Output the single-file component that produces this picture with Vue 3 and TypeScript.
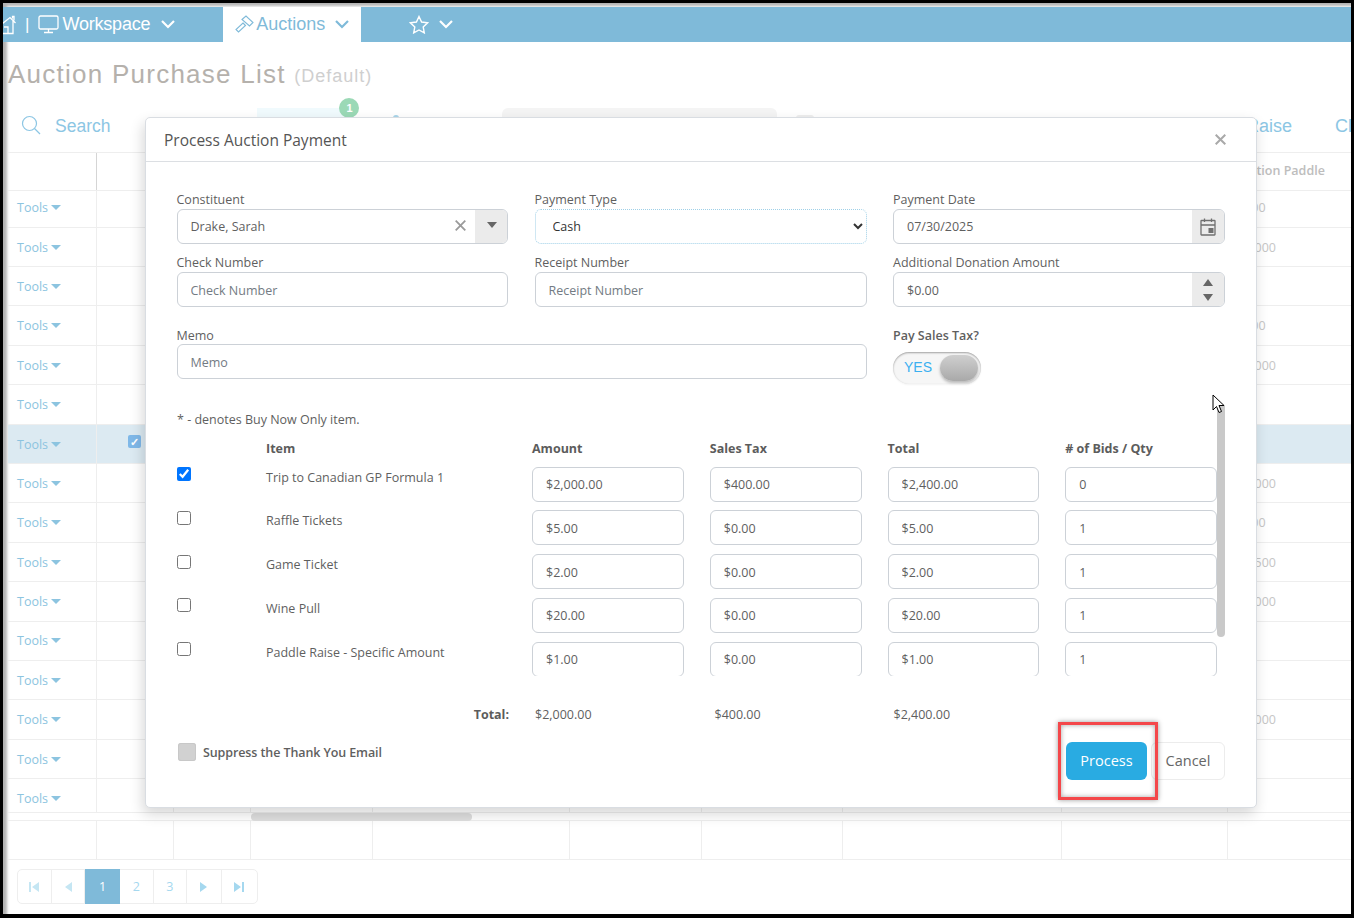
<script setup lang="ts">
interface BgRow { h: number; val: string; sel?: boolean; up?: number; down?: number }
const rows: BgRow[] = [
  { h: 37, val: '$100', up: 3 }, { h: 39, val: '$1,000' }, { h: 39, val: '' }, { h: 40, val: '$100' },
  { h: 39, val: '$1,000' }, { h: 40, val: '' }, { h: 39, val: '', sel: true }, { h: 39, val: '$1,000' },
  { h: 40, val: '$100' }, { h: 39, val: '$1,500' }, { h: 40, val: '$1,000' }, { h: 39, val: '', up: 2 },
  { h: 39, val: '' }, { h: 40, val: '$1,000' }, { h: 39, val: '' }, { h: 34, val: '', down: 6 }
]
const cols = [0, 1, 2, 3, 4, 5, 6, 7, 8]
const items = [
  { name: 'Trip to Canadian GP Formula 1', amount: '$2,000.00', tax: '$400.00', total: '$2,400.00', qty: '0', on: true },
  { name: 'Raffle Tickets', amount: '$5.00', tax: '$0.00', total: '$5.00', qty: '1', on: false },
  { name: 'Game Ticket', amount: '$2.00', tax: '$0.00', total: '$2.00', qty: '1', on: false },
  { name: 'Wine Pull', amount: '$20.00', tax: '$0.00', total: '$20.00', qty: '1', on: false },
  { name: 'Paddle Raise - Specific Amount', amount: '$1.00', tax: '$0.00', total: '$1.00', qty: '1', on: false }
]
</script>

<template>
  <div class="root">
    <nav class="nav">
      <svg class="house" width="14" height="20" viewBox="0 0 14 20" fill="none" stroke="#fff" stroke-width="1.3"><path d="M-1 9 7 2.500l5.500 5.500M10 6v12.500H-1M9.500 3.500V1.500h1.500v4M5 18.500V12h-4"/></svg>
      <span class="sep">|</span>
      <svg class="monitor" width="21" height="19" viewBox="0 0 21 19" fill="none" stroke="#fff" stroke-width="1.3"><rect x="1" y="1" width="19" height="13" rx="1.5"/><path d="M10.500 14v3M6 17.500h9"/></svg>
      <span class="nav-text">Workspace</span>
      <svg class="chev first-chev" width="14" height="9" viewBox="0 0 14 9" fill="none" stroke="#fff" stroke-width="2.200"><path d="m1 1 6 6 6-6"/></svg>
      <div class="tab">
        <svg width="19" height="19" viewBox="0 0 19 19" fill="none" stroke="#7fbad9" stroke-width="1.100"><path d="M7 4.500 11 1l7 6.500-3.500 3.500zM8 8l2.500 2.500-7 6.500L1 14.500z"/></svg>
        <span class="tab-text">Auctions</span>
        <svg class="chev" width="14" height="9" viewBox="0 0 14 9" fill="none" stroke="#7fbad9" stroke-width="2.200"><path d="m1 1 6 6 6-6"/></svg>
      </div>
      <svg class="star" width="20" height="19" viewBox="0 0 20 19" fill="none" stroke="#fff" stroke-width="1.400"><path d="m10 1.500 2.600 5.500 6 .8-4.400 4.100 1.100 6L10 15l-5.300 2.900 1.100-6L1.400 7.800l6-.8z"/></svg>
      <svg class="chev star-chev" width="14" height="9" viewBox="0 0 14 9" fill="none" stroke="#fff" stroke-width="2.200"><path d="m1 1 6 6 6-6"/></svg>
    </nav>

    <h1 class="title">Auction Purchase List <small>(Default)</small></h1>

    <div class="toolbar">
      <svg class="search-icon" width="20" height="20" viewBox="0 0 20 20" fill="none" stroke="#8cc6e4" stroke-width="1.200"><circle cx="8.500" cy="8.500" r="7"/><path d="m13.500 13.500 5.500 5.500"/></svg>
      <span class="tool-link search">Search</span>
      <span class="ghost-blue"><span class="badge">1</span></span>
      <span class="dot-blue"></span>
      <span class="ghost-gray"></span>
      <span class="dot-gray"></span>
      <span class="tool-link raise">Paddle Raise</span>
      <span class="tool-link clear">Clear</span>
    </div>

    <div class="grid-row head">
      <div v-for="c in cols" :key="c" class="cell"></div>
      <div class="cell last">Auction Paddle</div>
    </div>
    <div class="body">
      <div v-for="(r, i) in rows" :key="i" class="grid-row" :class="{ sel: r.sel }" :style="{ height: r.h + 'px' }">
        <div class="cell tools" :style="{ paddingBottom: (r.up ?? 0) + 'px', paddingTop: (r.down ?? 0) + 'px' }">Tools <i class="caret"></i></div>
        <div class="cell check-cell"><span v-if="r.sel" class="bg-check">✓</span></div>
        <div v-for="c in 7" :key="c" class="cell"></div>
        <div class="cell last" :style="{ paddingBottom: (r.up ?? 0) + 'px' }">{{ r.val }}</div>
      </div>
    </div>
    <div class="hscroll"><span class="hthumb"></span></div>
    <div class="grid-row empty">
      <div v-for="c in cols" :key="c" class="cell"></div>
      <div class="cell last"></div>
    </div>

    <div class="pager">
      <span class="pg"><svg width="11" height="10" viewBox="0 0 11 10" fill="#c5e6f3"><path d="M0 0h2v10H0zM10 0v10L3 5z"/></svg></span>
      <span class="pg"><svg width="8" height="10" viewBox="0 0 8 10" fill="#c5e6f3"><path d="M8 0v10L1 5z"/></svg></span>
      <span class="pg active">1</span>
      <span class="pg">2</span>
      <span class="pg">3</span>
      <span class="pg wide"><svg width="8" height="10" viewBox="0 0 8 10" fill="#a5d8ef"><path d="M0 0v10l7-5z"/></svg></span>
      <span class="pg wide"><svg width="11" height="10" viewBox="0 0 11 10" fill="#a5d8ef"><path d="M0 0v10l7-5zM8 0h2v10H8z"/></svg></span>
    </div>

    <section class="modal">
      <header class="modal-head">
        <h2>Process Auction Payment</h2>
        <svg width="11" height="11" viewBox="0 0 11 11" stroke="#a9a9a9" stroke-width="2"><path d="m.7.7 9.600 9.600M10.300.7.7 10.300"/></svg>
      </header>
      <div class="modal-body">
        <div class="form">
          <div class="field">
            <label>Constituent</label>
            <div class="group">
              <input class="ctl" value="Drake, Sarah" />
              <svg class="clear-x" width="11" height="11" viewBox="0 0 11 11" stroke="#9a9a9a" stroke-width="1.800"><path d="m.7.7 9.600 9.600M10.300.7.7 10.300"/></svg>
              <span class="addon"><svg class="drop" width="10" height="6" viewBox="0 0 10 6" fill="#666"><path d="M0 0h10L5 6z"/></svg></span>
            </div>
          </div>
          <div class="field">
            <label>Payment Type</label>
            <select class="ctl sel-ctl"><option>Cash</option></select>
          </div>
          <div class="field">
            <label>Payment Date</label>
            <div class="group">
              <input class="ctl" value="07/30/2025" />
              <span class="addon"><svg width="16" height="18" viewBox="0 0 16 18" fill="none" stroke="#707070" stroke-width="1.300"><rect x="1" y="2.500" width="14" height="14.500" rx=".5"/><path d="M1 7h14M4.500 .5v3.500M11.500 .5v3.500"/><rect x="8.500" y="10" width="5" height="5" fill="#707070" stroke="none"/></svg></span>
            </div>
          </div>
          <div class="field">
            <label>Check Number</label>
            <input class="ctl low" placeholder="Check Number" />
          </div>
          <div class="field">
            <label>Receipt Number</label>
            <input class="ctl low" placeholder="Receipt Number" />
          </div>
          <div class="field">
            <label>Additional Donation Amount</label>
            <div class="group">
              <input class="ctl low" value="$0.00" />
              <span class="addon spin">
                <svg width="10" height="7" viewBox="0 0 10 7" fill="#666"><path d="M0 7h10L5 0z"/></svg>
                <svg width="10" height="7" viewBox="0 0 10 7" fill="#666"><path d="M0 0h10L5 7z"/></svg>
              </span>
            </div>
          </div>
          <div class="field memo">
            <label>Memo</label>
            <input class="ctl low" placeholder="Memo" />
          </div>
          <div class="field memo-side">
            <label class="strong">Pay Sales Tax?</label>
            <div class="toggle"><span>YES</span><i></i></div>
          </div>
        </div>

        <div class="scroller">
          <p class="note">* - denotes Buy Now Only item.</p>
          <div class="item-grid headings">
            <span></span><b>Item</b><b>Amount</b><b>Sales Tax</b><b>Total</b><b># of Bids / Qty</b>
          </div>
          <div v-for="it in items" :key="it.name" class="item-grid item-row">
            <input class="cb" type="checkbox" :checked="it.on" />
            <span class="item-name">{{ it.name }}</span>
            <input class="ctl" :value="it.amount" />
            <input class="ctl" :value="it.tax" />
            <input class="ctl" :value="it.total" />
            <input class="ctl" :value="it.qty" />
          </div>
          <span class="vthumb"></span>
        </div>

        <div class="totals">
          <b>Total:</b><span>$2,000.00</span><span>$400.00</span><span>$2,400.00</span>
        </div>

        <div class="footer">
          <div class="suppress"><i></i><span>Suppress the Thank You Email</span></div>
          <div class="actions">
            <button class="btn primary">Process</button>
            <button class="btn">Cancel</button>
          </div>
        </div>
      </div>
    </section>

    <div class="callout"></div>
    <svg class="cursor" width="14" height="20" viewBox="0 0 14 20"><path d="M1 1v15l3.500-3.500 2.500 6 2.500-1-2.500-6h5z" fill="#fff" stroke="#000" stroke-width="1"/></svg>
  </div>
</template>

<style>
html, body { margin: 0; background: #fff; }
</style>

<style scoped>
.root {
  position: relative;
  width: 1354px;
  height: 918px;
  box-sizing: border-box;
  overflow: hidden;
  border: solid #000;
  border-width: 3px 3px 4px 3px;
  padding: 4px 0 0 5px;
  background: #fff;
  box-shadow: inset 4px 3px 3px rgba(0, 0, 0, 0.3);
  font-family: "Open Sans", "Noto Sans", sans-serif;
  font-size: 12.5px;
  color: #5f5f5f;
}
.nav {
  display: flex;
  align-items: center;
  height: 35px;
  margin-left: -5px;
  background: #7fbad9;
  color: #fff;
  font-family: "Liberation Sans", sans-serif;
  font-size: 18px;
}
.sep { margin-left: 8px; font-size: 17px; }
.monitor { margin-left: 9px; }
.nav-text { margin-left: 3px; letter-spacing: -0.2px; }
.chev { margin-left: 10px; flex: none; }
.first-chev { margin-left: 11px; }
.tab {
  display: flex;
  align-items: center;
  width: 138px;
  height: 35px;
  box-sizing: border-box;
  margin-left: 48px;
  padding-left: 12px;
  background: #fff;
}
.tab-text { margin-left: 2px; color: #7fbad9; }
.star { margin-left: 48px; }
.star-chev { margin-left: 10px; }
.title {
  height: 58px;
  margin: 0;
  font-family: "Liberation Sans", sans-serif;
  font-size: 26px;
  font-weight: 400;
  line-height: 65px;
  letter-spacing: 1.25px;
  color: #b5b1ac;
}
.title small { font-size: 18px; letter-spacing: 1px; color: #cfcfcf; position: relative; top: -1px; }
.toolbar {
  position: relative;
  display: flex;
  height: 52px;
  border-bottom: 1px solid #eee;
  font-family: "Liberation Sans", sans-serif;
  font-size: 18px;
}
.search-icon { margin: 15px 0 0 13px; }
.tool-link { color: #8cc6e4; }
.search { margin: 16px 0 0 14px; font-size: 17.500px; }
.ghost-blue {
  position: relative;
  width: 92px;
  height: 10px;
  margin: 8px 0 0 147px;
  background: #f0fafd;
}
.badge {
  position: absolute;
  right: -10px;
  top: -10px;
  width: 20px;
  height: 20px;
  border-radius: 50%;
  background: #9bd9b6;
  color: #fff;
  font-size: 11px;
  font-weight: 700;
  line-height: 20px;
  text-align: center;
}
.dot-blue { width: 6px; height: 3px; margin: 15px 0 0 44px; border-radius: 3px 3px 0 0; background: #a8d5ea; }
.ghost-gray {
  width: 275px;
  height: 10px;
  margin: 8px 0 0 103px;
  border-radius: 6px 6px 0 0;
  background: #f4f4f4;
}
.dot-gray { width: 18px; height: 3px; margin: 15px 0 0 19px; border-radius: 6px 6px 0 0; background: #eeeeee; }
.raise { margin: 16px 0 0 auto; }
.clear { margin: 16px -27px 0 43px; }
.grid-row {
  display: grid;
  grid-template-columns: 89px 77px 77px 122px 197px 132px 141px 219px 166px 1fr;
  box-sizing: border-box;
  border-bottom: 1px solid #eee;
}
.head { height: 38px; }
.head .cell:first-child { border-right-color: #d5d5d5; }
.cell { border-right: 1px solid #eee; min-width: 0; overflow: hidden; white-space: nowrap; box-sizing: border-box; }
.grid-row > .last { border-right: 0; padding-left: 9px; color: #c6c6c6; font-size: 12.5px; display: flex; align-items: center; }
.head > .last {
  padding-left: 6px;
  color: #bdbdbd;
  font-weight: 600;
  padding-bottom: 3px;
}
.sel { background: #dceaf2; }
.tools { display: flex; align-items: center; padding-left: 9px; color: #8cc4e0; gap: 3px; }
.caret { width: 0; height: 0; border: 5px solid transparent; border-top-color: #8cc4e0; border-bottom: 0; }
.check-cell { position: relative; }
.bg-check {
  position: absolute;
  left: 31px;
  top: 10px;
  width: 13px;
  height: 13px;
  border-radius: 2px;
  background: #7fb8e8;
  color: #fff;
  font-size: 11px;
  font-weight: 700;
  line-height: 13px;
  text-align: center;
}
.hscroll { position: relative; height: 7px; border-bottom: 1px solid #eee; }
.hthumb { position: absolute; left: 243px; top: 0; width: 221px; height: 8px; border-radius: 4px; background: #dedede; }
.empty { height: 39px; }
.pager {
  display: inline-flex;
  margin: 9px 0 0 9px;
  border: 1px solid #eeeeee;
  border-radius: 5px;
  height: 35px;
  box-sizing: border-box;
}
.pg {
  display: flex;
  align-items: center;
  justify-content: center;
  box-sizing: border-box;
  width: 33.500px;
  border-right: 1px solid #eee;
  color: #a5d8ef;
  font-size: 12.5px;
}
.pg.wide { width: 35px; }
.pg:last-child { border-right: 0; }
.pg.active { background: #7fbad9; color: #fff; margin: -1px 0; width: 35px; border-right: 0; }
.modal {
  position: absolute;
  left: 142px;
  top: 114px;
  width: 1112px;
  height: 691px;
  box-sizing: border-box;
  border: 1px solid #d9dde2;
  border-radius: 5px;
  background: #fff;
  box-shadow: -2px 6px 14px rgba(0, 0, 0, 0.16);
}
.modal-head {
  display: flex;
  align-items: center;
  justify-content: space-between;
  height: 44px;
  box-sizing: border-box;
  padding: 0 30px 0 18px;
  border-bottom: 1px solid #dcdfe3;
}
.modal-head h2 { margin: 0; font-size: 15.500px; font-weight: 400; color: #555; }
.modal-head svg { margin-bottom: 1px; }
.modal-body { padding: 29px 31px 0; }
.form {
  display: grid;
  grid-template-columns: 331.500px 332px 332px;
  column-gap: 26.500px;
  margin-left: -0.5px;
}
.field { display: flex; flex-direction: column; }
.field label { height: 18px; line-height: 18px; }
.field:nth-child(n + 4) { margin-top: 10px; }
.memo { grid-column: span 2; margin-top: 20px !important; }
.memo label { height: 17px; }
.memo-side { margin-top: 20px !important; }
.memo-side label { height: 17px; }
.strong { font-weight: 600; }
.ctl {
  width: 100%;
  height: 35px;
  box-sizing: border-box;
  margin: 0;
  padding: 0 13px;
  border: 1px solid #ccd1d7;
  border-radius: 6px;
  background: #fff;
  font: inherit;
  color: #5f5f5f;
  outline: none;
}
.low { padding-top: 2px; }
.ctl::placeholder { color: #737b83; opacity: 1; }
.sel-ctl {
  border: 1px dotted #9fd0e8;
  color: #333;
  padding-left: 13px;
}
.group { position: relative; display: flex; }
.addon {
  position: absolute;
  right: 1px;
  top: 1px;
  bottom: 1px;
  width: 32px;
  display: flex;
  align-items: center;
  justify-content: center;
  background: #ebebeb;
  border-radius: 0 5px 5px 0;
}
.drop { margin: -3px 0 0 1px; }
.spin { flex-direction: column; gap: 8px; }
.clear-x { position: absolute; right: 42px; top: 11px; }
.toggle {
  position: relative;
  width: 88px;
  height: 32px;
  margin-top: 8px;
  box-sizing: border-box;
  border-radius: 16px;
  background: #f6f6f6;
  box-shadow: inset 0 1px 2px rgba(0, 0, 0, 0.35), 0 1px 2px rgba(0, 0, 0, 0.05);
  color: #3cb0f0;
  font-family: "Liberation Sans", sans-serif;
  font-size: 14px;
  line-height: 30px;
  padding-left: 11px;
}
.toggle i {
  position: absolute;
  right: 3px;
  top: 3px;
  width: 38px;
  height: 26px;
  border-radius: 13px;
  background: linear-gradient(#cfcfcf, #a9a9a9);
  box-shadow: 0 2px 3px rgba(0, 0, 0, 0.25);
}
.scroller {
  position: relative;
  height: 271px;
  margin-top: 21px;
  overflow: hidden;
}
.note { margin: 7px 0 0; height: 16px; line-height: 16px; }
.item-grid {
  display: grid;
  grid-template-columns: 63px 240px repeat(4, 151.750px);
  column-gap: 26px;
  width: 1040px;
}
.headings { margin-top: 13px; height: 25.600px; line-height: 16px; }
.headings b { font-weight: 700; color: #5c5c5c; }
.item-row { height: 35px; margin-bottom: 8.750px; }
.item-row:nth-of-type(n + 3):nth-of-type(-n + 4) .ctl { padding-top: 2px; }
.item-row:nth-of-type(n + 3):nth-of-type(-n + 4) .cb { margin-top: 1px; }
.cb { width: 14px; height: 14px; margin: 0; }
.item-name { line-height: 21px; }
.vthumb {
  position: absolute;
  right: 0;
  top: 0;
  width: 8px;
  height: 232px;
  border-radius: 0 0 4px 4px;
  background: #c9c9c9;
}
.totals {
  display: grid;
  grid-template-columns: 332px 179.500px 179px 1fr;
  margin-top: 31px;
  height: 16px;
  line-height: 16px;
}
.totals b { font-weight: 700; text-align: right; color: #5c5c5c; }
.totals span { padding-left: 26px; }
.footer { display: flex; justify-content: space-between; margin-top: 19px; }
.suppress { display: flex; align-items: center; gap: 7px; height: 18px; margin-top: 1px; font-weight: 600; letter-spacing: -0.1px; }
.suppress i { display: block; width: 18px; height: 18px; margin-left: 1px; border-radius: 3px; background: #d1d1d1; box-shadow: inset 0 0 0 1px #c8c8c8; }
.actions { display: flex; gap: 4px; }
.btn {
  width: 74px;
  height: 38px;
  padding: 0 0 1px;
  border: 1px solid #ececec;
  border-radius: 6px;
  background: #fff;
  font-family: "Open Sans", sans-serif;
  font-size: 14.500px;
  color: #666;
}
.btn.primary { width: 81px; padding-bottom: 2px; border: 0; background: #29abe2; color: #fff; }
.callout {
  position: absolute;
  left: 1055px;
  top: 719px;
  width: 100px;
  height: 78px;
  box-sizing: border-box;
  border: 3px solid #f4474a;
  box-shadow: 0 0 5px rgba(0, 0, 0, 0.4), inset 0 0 5px rgba(0, 0, 0, 0.35);
}
.cursor { position: absolute; left: 1209px; top: 391px; }
</style>
